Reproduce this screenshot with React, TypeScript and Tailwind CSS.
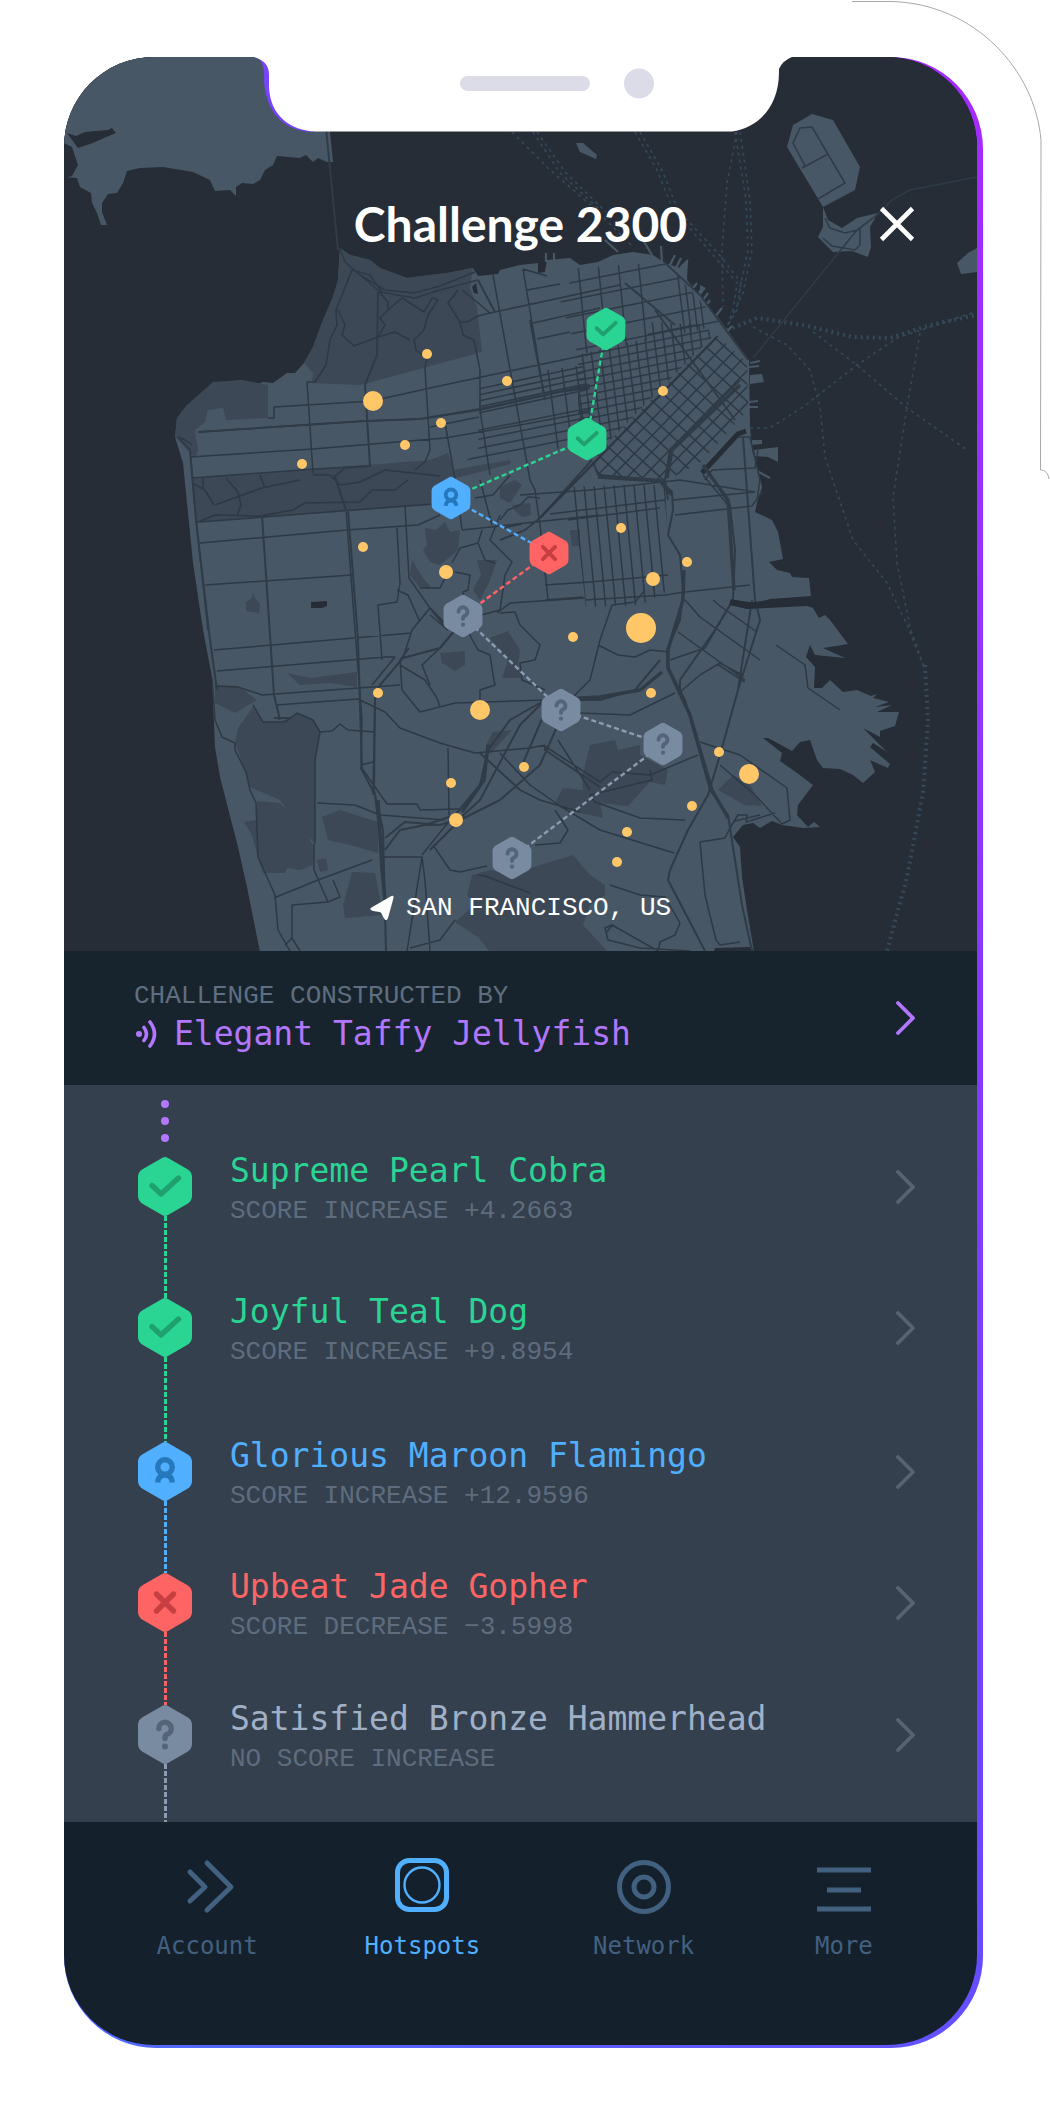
import React from "react";

type Kind = "check" | "award" | "cross" | "unknown";

const MONO = "font-['DejaVu_Sans_Mono',monospace]";
const CAPS = "font-['Liberation_Mono',monospace]";

const HEX: Record<Kind, { fill: string; mark: string }> = {
  check: { fill: "#2ad594", mark: "#20a06f" },
  award: { fill: "#51afff", mark: "#2678bd" },
  cross: { fill: "#ff6464", mark: "#c83f42" },
  unknown: { fill: "#798ba1", mark: "#556579" },
};

/** Hexagon badge drawn around the origin, 54 wide and 59 high. */
function HexShape({ kind }: { kind: Kind }) {
  const { fill, mark } = HEX[kind];
  return (
    <g>
      <path
        fill={fill}
        d="M-3 -28.5 Q0 -30.3 3 -28.5 L22.5 -17.3 Q27 -14.5 27 -9.5 L27 9.5 Q27 14.5 22.5 17.3 L3 28.5 Q0 30.3 -3 28.5 L-22.5 17.3 Q-27 14.5 -27 9.5 L-27 -9.5 Q-27 -14.5 -22.5 -17.3 Z"
      />
      <g fill="none" stroke={mark} strokeWidth="5.4" strokeLinecap="round" strokeLinejoin="round">
        {kind === "check" && <path d="M-13 -1 L-4 7.5 L13.5 -8.5" />}
        {kind === "cross" && <path d="M-8.5 -8.5 L8.5 8.5 M8.5 -8.5 L-8.5 8.5" />}
        {kind === "award" && (
          <g strokeLinecap="butt">
            <circle cx="0" cy="-4.5" r="7.3" />
            <path d="M-7.3 11 C-7 5.5 -4 3.6 0 3.6 C4 3.6 7 5.5 7.3 11" />
          </g>
        )}
        {kind === "unknown" && <path d="M-6.2 -6 A6.2 6.2 0 1 1 2.2 -0.2 Q0 0.8 0 4" />}
      </g>
      {kind === "unknown" && <circle cx="0" cy="12" r="3" fill={mark} />}
    </g>
  );
}

/** Parallel street segments: `n` copies of one segment, each moved by (sx, sy). */
function streets(x: number, y: number, dx: number, dy: number, sx: number, sy: number, n: number) {
  return Array.from({ length: n }, (_, i) => `M${x + i * sx} ${y + i * sy}l${dx} ${dy}`).join("");
}

const LAND =
  "M340 248 L338 280 L333 297 L323 320 L313 347 L304 363 L295 373 L287 373 L273 383 L263 382 L255 385 L242 380 L227 382 L213 382 L197 400 L187 405 L177 418 L175 437 L183 463 L188 513 L193 563 L203 630 L212 677 L215 747 L220 777 L238 847 L247 887 L260 952 L754 952 L747 910 L742 877 L740 847 L733 837 L743 825 L753 823 L760 828 L772 821 L782 825 L803 828 L820 827 L814 822 L808 827 L797 815 L798 805 L813 785 L797 773 L780 761 L782 753 L763 738 L768 738 L792 751 L800 742 L810 740 L817 760 L823 768 L840 769 L853 775 L863 783 L875 772 L870 760 L888 768 L890 764 L870 747 L873 743 L887 752 L863 728 L880 737 L880 731 L895 726 L899 712 L877 712 L892 705 L875 707 L889 702 L873 698 L877 694 L871 696 L857 690 L843 692 L830 680 L822 688 L814 688 L815 667 L806 657 L810 645 L815 655 L845 658 L823 648 L848 644 L830 620 L825 615 L819 618 L813 608 L807 606 L747 609 L733 603 L735 600 L757 603 L770 599 L811 596 L809 578 L792 577 L790 573 L777 570 L769 562 L783 559 L778 532 L772 520 L755 512 L757 503 L762 487 L758 470 L752 450 L751 437 L750 428 L749 360 L743 352 L720 320 L687 280 L688 260 L680 268 L665 263 L653 255 L633 252 L613 255 L598 262 L580 265 L570 258 L547 260 L545 272 L538 273 L538 263 L520 265 L500 270 L498 274 L478 276 L473 268 L447 273 L407 278 L380 268 L370 260 L350 255 Z";

const PARKS =
  "M340 248 L350 255 L370 260 L380 268 L407 278 L447 273 L473 268 L470 288 L477 307 L482 352 L427 367 L360 385 L312 383 L313 373 L304 363 L313 347 L323 320 L333 297 L338 280Z" +
  "M213 382 L242 380 L268 385 L268 418 L226 420 L223 408 L208 410 L205 422 L195 430 L198 450 L195 458 L175 437 L177 418 L187 405Z" +
  "M192 478 L303 470 L430 460 L448 453 L454 470 L510 460 L511 464 L456 478 L433 505 L197 522Z" +
  "M215 685 L238 686 L257 700 L235 713 L215 703Z" +
  "M253 707 L263 722 L280 722 L297 713 L313 720 L320 733 L315 760 L315 843 L303 833 L280 800 L250 787 L243 765 L235 743 L238 728Z" +
  "M257 801 L280 803 L298 822 L313 845 L313 865 L300 870 L287 868 L285 873 L263 873 L257 853 L252 835 L244 822 L256 820Z" +
  "M322 817 L340 810 L378 822 L378 853 L350 845 L328 840Z M352 872 L375 873 L383 915 L345 918 L343 905Z M317 860 L326 858 L328 870 L320 872Z" +
  "M467 895 L472 875 L490 870 L512 875 L540 865 L573 855 L590 875 L605 885 L605 895 L590 905 L583 925 L608 952 L490 952 L478 937 L455 922 L475 905Z" +
  "M425 528 L436 530 L445 522 L450 532 L460 530 L458 550 L440 565 L430 562 L423 550 L427 545Z M412 560 L423 578 L432 588 L420 588 L410 575Z" +
  "M477 560 L497 560 L490 580 L480 600 L473 590 L481 575Z M500 487 L515 480 L522 485 L510 503 L500 498Z M512 505 L530 503 L531 515 L522 517 L514 510Z" +
  "M490 638 L508 631 L520 650 L518 665 L521 678 L502 678 L508 660Z M440 653 L465 651 L465 665 L455 671 L442 663Z" +
  "M287 673 L310 678 L357 672 L357 687 L330 683 L300 685Z M493 732 L512 730 L490 754 L486 745Z" +
  "M590 745 L615 740 L618 750 L640 745 L640 755 L668 770 L665 785 L650 782 L628 806 L600 803 L603 818 L575 812 L555 803 L563 788 L583 790 L582 778Z" +
  "M718 790 L733 775 L750 785 L762 806 L745 805Z M246 602 L252 598 L253 592 L255 598 L260 604 L259 613 L246 611Z M570 530 L580 530 L580 546 L572 546Z";

const ROADS =
  "M198 432 L365 421 L420 419 L480 410 L560 392 L590 388 M190 457 L313 449 L445 438 L520 425 L590 412 M192 478 L315 469 L368 466" +
  "M268 418 L274 418 L274 407 L372 401 L430 388 L505 372 L600 352 M313 473 L307 382 L315 382 L326 365 L330 340 L337 325 L336 310 L352 270 L370 275 L382 292" +
  "M340 248 L345 262 L360 275 L380 292 L415 298 L440 290 L478 280 M360 275 L385 290 L414 293 L440 286 L475 272" +
  "M462 290 L477 302 L490 313 L478 316 L467 322 L460 322 L448 303 L458 290 M460 322 L463 335 L474 340 L480 370 L480 410 L490 475" +
  "M379 292 L388 302 L388 310 L380 318 L385 325 L378 337 L354 346 L342 335 L345 325 L338 310 M388 310 L402 298 L424 312 L432 298 L438 300 L428 315 L424 330 L414 340 L416 350 L427 358 L425 368 L430 450 L425 462 L415 470 M378 337 L395 332 L410 340" +
  "M523 269 L545 400 M493 275 L530 480 L535 490 L540 525 L548 600 M490 313 L620 285 M527 290 L560 284 M533 323 L600 308 M537 339 L570 332 M523 269 L547 276" +
  "M445 423 L457 490 L462 530 M430 427 L479 417" +
  "M192 445 L185 440 L178 437 L190 450 L196 520 L208 630 M200 522 L405 506 L435 504 M200 543 L347 530 L418 525 L440 515 M205 585 L352 575" +
  "M334 475 L346 510 L355 630 L362 720 L361 770 M405 506 L409 578 L430 608 L447 625 M397 528 L400 583 L397 602 L378 605 L382 660" +
  "M313 475 L330 475 L340 485 L360 482 L385 470 L440 476 M215 505 L262 488 L300 480 M226 478 L238 492 L241 505 L237 516 M192 483 L205 490 L214 505" +
  "M196 523 L215 515 L260 516 L293 510 L305 503 L360 502 L372 490 L395 490 L408 480 M203 478 L203 490 M260 475 L265 488" +
  "M397 590 L408 595 L420 622 M214 650 L412 633 M217 671 L385 657 L395 657 L372 685 M215 686 L238 687 L262 695 L400 685" +
  "M276 705 L358 699 L385 712 L400 728 L440 743 L475 753 L530 748 L545 745 M320 732 L332 731 L340 724 L348 730 L375 732 M375 695 L373 795" +
  "M212 677 L215 720 L222 737 L235 743 L235 750 L246 772 L250 790 L256 803 L258 857 L275 895 L278 930 L290 951 M314 843 L314 870 L328 902 L340 897 L333 880" +
  "M315 843 L315 760 L320 732 L313 720 L297 713 L285 722 L263 722 L253 705 M274 898 L318 880 L372 860 M328 902 L292 905 L292 938 L300 951 M292 938 L285 945" +
  "M361 767 L387 804 L417 804 L420 810 L460 809 M317 803 L355 805 L380 815 L445 820 M361 765 L373 762 M448 748 L449 815" +
  "M384 857 L422 857 L425 880 L430 951 M422 857 L407 951 M422 855 L450 820 M433 845 L450 870 L460 872 L487 866" +
  "M409 648 L400 660 L402 690 L420 712 L455 703 L545 700 M400 665 L425 680 L437 698 L440 707 M430 608 L412 630 L403 658 L440 648 L455 630 M440 648 L422 665 L430 685" +
  "M467 630 L478 650 L490 655 L493 675 L495 685 L480 690 L480 702 M500 613 L515 612 L520 625 L540 645 L535 660 L520 663 L522 680 L545 690" +
  "M497 613 L510 603 L585 598 M430 615 L448 630 M455 572 L470 575 L468 590 L463 592 L463 600 M420 588 L440 588 L445 578 M452 563 L460 548 L478 543 L482 530 M478 543 L485 560 L495 563" +
  "M462 530 L500 526 L535 522 L600 515 M510 475 L493 495 L475 498 M480 480 L492 525 M500 515 L490 540 L512 562 L505 575 L500 610 L463 620 M503 528 L522 524" +
  "M520 495 L590 490 L680 480 L755 492 M540 498 L528 497 L520 505 L508 510 L500 520 M568 520 L660 508 M550 514 L665 500 M545 585 L590 582 L668 575 M545 600 L583 597 M675 515 L752 506 L762 492 M673 500 L755 492" +
  "M558 740 L590 790 M543 745 L600 782 L612 772 L650 775 L698 755 M500 753 L530 785 L560 806 L600 830 L674 853 M595 802 L640 818 L685 820 M595 802 L590 795 L652 780 L650 770" +
  "M520 790 L540 800 L580 812 M555 810 L568 830 L560 843 L535 845 M478 875 L485 876 L530 893 M410 948 L440 940 L455 920" +
  "M610 885 L640 895 L665 897 L680 923 L675 935 L660 942 L658 951 L612 925 L607 932 M612 925 L605 928 L608 940 L640 948 L690 951" +
  "M700 842 L725 838 L730 828 L738 815 L747 815 L746 822 L775 813 M700 842 L705 895 L716 940 L720 945 L740 942 M735 821 L760 815 M700 742 L740 755 L787 788 L790 820 L782 824 L755 795 L720 765" +
  "M713 600 L720 606 L757 632 M685 600 L700 617 L760 660 M678 632 L745 680 M670 660 L705 648 L730 605 M680 692 L700 675 L720 663 L742 675 M598 645 L618 655 L635 657 L650 650 L670 652 M776 645 L805 665 L808 688 L840 710 M717 664 L745 682" +
  "M585 600 L665 595 L685 592 M645 590 L635 602 L612 605 L600 640 L590 680 L570 700 M685 592 L750 585 M703 475 L728 505 M738 437 L750 437 L760 480 L757 500 M712 470 L755 468 L758 450 M712 470 L705 480 M580 713 L630 715 L675 693";

const MAIN_ROADS =
  "M378 292 L377 355 L365 385 L370 466 L345 468 L335 476 L346 510 M198 432 L365 421 L420 419 L480 409 L590 385 M545 400 L530 320" +
  "M190 450 L196 520 L210 640 L217 690 M262 515 L274 695 L280 720 M348 510 L358 640 L362 770 L375 795 L384 870 L386 951" +
  "M430 608 L448 630 M455 630 L440 648 L403 658 L380 685 L375 700 L374 790 L383 830 L386 951" +
  "M274 718 L290 718 M478 280 L495 312 M540 518 L592 460 M540 518 L525 530 L500 540 M593 462 L598 475 L660 480 L672 492 L673 510 L668 535 L680 555 L683 590 L680 620 L667 650 L667 665 L685 700 L710 790 L728 815 L735 860 L742 905 L752 951" +
  "M660 660 L635 690 L600 700 L545 700 L510 720 L488 750 L480 785 L455 815 L425 825 L400 830 L385 850 M545 700 L520 725 L480 800 L458 820 M455 820 L440 825 L405 822 L385 838" +
  "M655 310 L735 420 M560 720 L540 765 L500 800 L460 820 L430 850 M548 705 L520 770 M704 465 L730 505 L735 550 L733 600 L715 630 L680 680 L680 695 M752 600 L738 690 L720 755 L708 795 L688 830 L670 870 L668 880 L705 951 M743 437 L755 600 L760 620 L738 690" +
  "M665 263 L700 295 L748 360 M625 283 L675 325 M545 745 L545 750 L600 787 M480 753 L520 790 M668 500 L665 480 L670 450 L740 380";

const FREEWAY =
  "M545 700 L600 697 L640 690 L662 672 M684 570 L683 600 L668 650 L668 668 L690 715 L706 770 L712 790 L728 818 M488 745 L484 780 L462 812 M378 800 L382 870 L385 900 M598 477 L660 481 L672 495 M740 385 L672 450 L667 478 M703 465 L728 500 L734 590";

const FERRIES =
  "M512 132 L550 170 L593 207 L633 247 M533 132 L560 173 L600 210 M537 132 L566 173 L606 212 M635 132 L657 170 L673 210 L700 240 L720 263 L737 283 L733 310 L727 327 M640 132 L662 170 L678 210 L704 238 L724 260 L741 283 L737 310 L727 327" +
  "M737 132 L727 183 L722 250 L723 307 M740 132 L750 200 L752 250 L743 293 L728 325 M735 132 L746 200 L748 250 L739 293" +
  "M753 327 L787 345 L810 370 L820 407 L825 457 L853 540 L887 583 L908 627 L925 670 M813 332 L857 365 L907 408 L967 450 M750 428 L770 428 L803 407 L857 365 L897 338 L975 312 M920 333 L907 407 L893 497 L897 563 L910 627 L925 670";

const FERRIES_BOLD =
  "M727 330 L757 318 L803 325 L853 337 L890 338 L930 325 L977 315 M925 665 L928 720 L923 793 L907 877 L887 951";

const PIERS =
  "M697 283 L690 292 M703 287 L695 298 M708 293 L700 304 M710 300 L704 308 M661 246 L662 262 M675 255 L670 265 M681 258 L676 268 M640 235 L652 255 M605 240 L618 252 M722 308 L714 318 M732 326 L724 335 M546 253 L546 262 M554 253 L554 262 M680 268 L688 260 M750 363 L760 361 M749 367 L759 366 M749 402 L758 401 M749 407 L758 407 M755 470 L770 478";

const PIER_BLOCKS =
  "M750 375 L762 374 L764 382 L750 384Z M752 440 L762 440 L762 444 L752 445Z M754 450 L778 447 L778 462 L768 457 L755 456Z M688 260 L686 280 L678 270Z M700 285 L706 288 L700 296Z";

const NODES: { x: number; y: number; kind: Kind }[] = [
  { x: 606, y: 329, kind: "check" },
  { x: 587, y: 439, kind: "check" },
  { x: 451, y: 498, kind: "award" },
  { x: 549, y: 553, kind: "cross" },
  { x: 463, y: 616, kind: "unknown" },
  { x: 561, y: 710, kind: "unknown" },
  { x: 663, y: 744, kind: "unknown" },
  { x: 512, y: 858, kind: "unknown" },
];

const HOTSPOTS: [number, number, number][] = [
  [427, 354, 5], [373, 401, 10], [507, 381, 5], [441, 423, 5], [405, 445, 5], [302, 464, 5],
  [363, 547, 5], [446, 572, 7], [663, 391, 5], [621, 528, 5], [687, 562, 5], [653, 579, 7],
  [641, 628, 15], [573, 637, 5], [651, 693, 5], [719, 752, 5], [749, 774, 10], [692, 806, 5],
  [627, 832, 5], [617, 862, 5], [378, 693, 5], [480, 710, 10], [524, 767, 5], [451, 783, 5], [456, 820, 7],
];

function CityMap() {
  return (
    <svg viewBox="64 57 913 894" className="block h-auto w-full bg-[#262d36]" role="img" aria-label="Map of San Francisco">
      <defs>
        <clipPath id="soma">
          <path d="M717 335 L747 363 L748 410 L700 463 L663 482 L600 477 L590 460Z" />
        </clipPath>
        <clipPath id="downtown">
          <path d="M578 355 L648 338 L648 322 L706 325 L712 337 L592 458 L578 420Z" />
        </clipPath>
        <clipPath id="northeast">
          <path d="M578 268 L665 262 L722 325 L650 340 L578 355 L560 300Z" />
        </clipPath>
        <clipPath id="western">
          <path d="M480 382 L580 355 L600 440 L456 470 L478 450Z" />
        </clipPath>
        <clipPath id="mission">
          <path d="M572 487 L665 483 L670 590 L640 605 L586 607Z" />
        </clipPath>
      </defs>

      <path
        fill="#485766"
        d="M64 57 L333 57 L330 132 L333 162 L327 162 L318 158 L313 162 L306 155 L300 158 L277 156 L273 165 L265 170 L260 180 L253 184 L242 183 L236 187 L236 196 L230 190 L215 191 L210 180 L193 172 L163 167 L140 168 L127 171 L123 183 L117 193 L108 194 L102 203 L102 212 L107 225 L101 225 L97 213 L92 203 L91 193 L80 187 L77 178 L64 177 Z"
      />
      <path fill="#262d36" d="M67 133 L76 136 L85 132 L108 130 L112 128 L116 133 L104 138 L93 143 L78 148 Z M64 143 L72 147 L78 165 L72 176 L64 178Z" />
      <path fill="none" stroke="#303c49" strokeWidth="2" d="M326 128 L338 250" />

      <g fill="none" stroke="#35495a" strokeWidth="1.6" strokeDasharray="3 4">
        <path d={FERRIES} />
        <path d={FERRIES_BOLD} strokeWidth="4" strokeDasharray="2 4" />
      </g>

      <path
        fill="#485766"
        d="M812 114 L833 120 L860 167 L855 190 L823 207 L787 147 L793 125Z M823 207 L828 220 L842 228 L857 218 L878 213 L870 227 L871 247 L868 257 L852 251 L833 252 L818 237 L823 227Z M576 143 L583 143 L597 155 L596 159 L580 152Z M957 263 L968 253 L977 248 L977 272 L961 274Z"
      />
      <path
        fill="none"
        stroke="#2f3b48"
        strokeWidth="1.6"
        d="M805 166 L793 143 L800 128 L812 127 L845 183 L818 199 M802 168 L828 154 M825 218 L830 228 L845 233 L858 230 M823 238 L832 246 L855 250 L860 245 L860 228 M753 358 L857 230 L877 215 M877 215 L892 200 L910 190 L977 177"
      />

      <path fill="#485766" d={LAND} />
      <path fill="#3c4855" d={PARKS} />
      <path fill="#485766" d={PIER_BLOCKS} />
      <path fill="none" stroke="#485766" strokeWidth="2.2" d={PIERS} />
      <path fill="none" stroke="#262d36" strokeWidth="5" d="M746 431 L738 434 L702 473" />
      <path fill="#262d36" d="M311 602 L327 601 L327 606 L322 608 L311 608Z M472 287 L476 283 L478 294 L474 293Z M478 270 L500 263 L500 270 L478 275Z M715 948 L750 947 L754 951 L714 951Z" />

      <g fill="none" stroke="#2d3945" strokeWidth="1.5" strokeLinejoin="round">
        <path d={ROADS} />
        <g clipPath="url(#soma)">
          <path d={streets(540, 518, 200, -205, 9, 7, 26)} />
          <path d={streets(700, 290, 130, 118, -9, 9, 22)} />
        </g>
        <g clipPath="url(#downtown)">
          <path d={streets(570, 350, 160, -32, 0, 8, 20)} />
          <path d={streets(570, 330, 16, 130, 9, -2, 16)} />
        </g>
        <g clipPath="url(#northeast)">
          <path d={streets(560, 285, 170, -34, 0, 17, 8)} />
          <path d={streets(577, 255, 12, 120, 20, -2, 4)} />
          <path d={streets(676, 262, 10, 80, 7, 4, 4)} />
        </g>
        <g clipPath="url(#western)">
          <path d={streets(450, 395, 150, -32, 0, 6, 5)} />
          <path d={streets(450, 436, 150, -30, 0, 9, 6)} />
          <path d={streets(548, 370, 14, 110, 14, -2, 4)} />
        </g>
        <g clipPath="url(#mission)">
          <path d={streets(574, 485, 12, 125, 10, 0, 10)} />
        </g>
      </g>
      <path d={MAIN_ROADS} fill="none" stroke="#2f3b47" strokeWidth="2" strokeLinejoin="round" />
      <path d={FREEWAY} fill="none" stroke="#2f3b47" strokeWidth="3.4" strokeLinejoin="round" />
      <path d="M540 518 L717 337" fill="none" stroke="#2c3743" strokeWidth="2.2" />
      <path d="M730 602 L747 606 L770 603 L812 601" fill="none" stroke="#262d36" strokeWidth="6" />

      {HOTSPOTS.map(([x, y, r]) => (
        <circle key={`${x}-${y}`} cx={x} cy={y} r={r} fill="#ffc768" />
      ))}
      {NODES.slice(1).map((n, i) => (
        <line
          key={i}
          x1={NODES[i].x}
          y1={NODES[i].y}
          x2={n.x}
          y2={n.y}
          stroke={NODES[i].kind === "unknown" ? "#8b9cb2" : HEX[NODES[i].kind].fill}
          strokeWidth="2.4"
          strokeDasharray="5 3"
        />
      ))}
      {NODES.map((n) => (
        <g key={n.y} transform={`translate(${n.x} ${n.y}) scale(0.72)`}>
          <HexShape kind={n.kind} />
        </g>
      ))}
    </svg>
  );
}

function Chevron({ className }: { className: string }) {
  return (
    <svg viewBox="0 0 20 34" className={`h-[34px] w-5 shrink-0 ${className}`} aria-hidden="true">
      <path d="M2 2 L17 17 L2 32" fill="none" stroke="currentColor" strokeWidth="3.8" strokeLinecap="round" strokeLinejoin="round" />
    </svg>
  );
}

const ROWS: { name: string; detail: string; kind: Kind; color: string; text: string; height: string }[] = [
  { name: "Supreme Pearl Cobra", detail: "SCORE INCREASE +4.2663", kind: "check", color: "text-[#2ad594]", text: "text-[#2ad594]", height: "min-h-[141px]" },
  { name: "Joyful Teal Dog", detail: "SCORE INCREASE +9.8954", kind: "check", color: "text-[#2ad594]", text: "text-[#2ad594]", height: "min-h-[144px]" },
  { name: "Glorious Maroon Flamingo", detail: "SCORE INCREASE +12.9596", kind: "award", color: "text-[#51afff]", text: "text-[#51afff]", height: "min-h-[131px]" },
  { name: "Upbeat Jade Gopher", detail: "SCORE DECREASE −3.5998", kind: "cross", color: "text-[#ff6464]", text: "text-[#ff6464]", height: "min-h-[132px]" },
  { name: "Satisfied Bronze Hammerhead", detail: "NO SCORE INCREASE", kind: "unknown", color: "text-[#8b9cb2]", text: "text-[#a0b1c7]", height: "min-h-[117px]" },
];

function HopRow({ row }: { row: (typeof ROWS)[number] }) {
  return (
    <li>
      <button type="button" className={`flex w-full items-stretch gap-[38px] pr-[61px] pl-[74px] text-left ${row.height}`}>
        <span className={`flex shrink-0 flex-col items-center ${row.color}`}>
          <svg viewBox="-27 -29.5 54 59" className="h-[59px] w-[54px]" aria-hidden="true">
            <HexShape kind={row.kind} />
          </svg>
          <span className="w-[3px] flex-1 bg-[repeating-linear-gradient(to_bottom,currentColor_0_5px,transparent_5px_7px)]" />
        </span>
        <span className="-mt-1.5 flex flex-1 flex-col">
          <span className={`text-[33px] leading-10 ${MONO} ${row.text}`}>{row.name}</span>
          <span className={`text-[26px] leading-10 text-[#5f6c7e] ${CAPS}`}>{row.detail}</span>
        </span>
        <span className="flex h-[59px] items-center">
          <Chevron className="text-[#566372]" />
        </span>
      </button>
    </li>
  );
}

const TABS: { label: string; active?: boolean; icon: React.ReactNode }[] = [
  {
    label: "Account",
    icon: <path d="M11 14 L26 29 L11 43 M28 5 L52 29 L28 52" strokeWidth="5" strokeLinecap="round" strokeLinejoin="round" />,
  },
  {
    label: "Hotspots",
    active: true,
    icon: (
      <>
        <rect x="3.5" y="2.5" width="49" height="49" rx="12" strokeWidth="5" />
        <circle cx="28" cy="27" r="17.5" strokeWidth="2.4" />
      </>
    ),
  },
  {
    label: "Network",
    icon: (
      <>
        <circle cx="28" cy="29" r="24.5" strokeWidth="5" />
        <circle cx="28" cy="29" r="10" strokeWidth="5" />
      </>
    ),
  },
  { label: "More", icon: <path d="M1 12 H55 M11 32 H45 M1 51 H55" strokeWidth="5" /> },
];

export default function App() {
  return (
    <div className="relative min-h-screen bg-white pt-[57px] pr-[67px] pb-[62px] pl-16">
      <svg viewBox="0 0 200 480" className="absolute top-0 right-0 h-[480px] w-[200px]" aria-hidden="true">
        <path
          d="M2 1.5 L42 1.5 C125 4 185 70 191 140 L190.5 470 C195 470 198 473 199 479"
          fill="none"
          stroke="#a9a9ad"
          strokeWidth="1"
        />
      </svg>

      <main className="relative rounded-[92px] bg-[linear-gradient(210deg,#a62bff,#6c45ff_70%,#4f6bff)] pr-1.5 pb-[3px]">
        <div className="overflow-hidden rounded-[90px] bg-[#14202b]">
          <section className="relative">
            <CityMap />
            <div className="absolute inset-0 flex flex-col justify-between pt-[137px] pb-[27px] text-white">
              <header className="grid grid-cols-[1fr_auto_1fr] items-center">
                <h1 className="col-start-2 font-['Lato',sans-serif] text-[48px] leading-[60px] font-bold">Challenge 2300</h1>
                <button type="button" aria-label="Close" className="mr-[62px] justify-self-end">
                  <svg viewBox="0 0 36 36" className="size-9" aria-hidden="true">
                    <path d="M2.5 2.5 L33.5 33.5 M33.5 2.5 L2.5 33.5" stroke="white" strokeWidth="4.6" />
                  </svg>
                </button>
              </header>
              <p className={`flex items-center justify-center gap-3 text-[26px] leading-8 ${CAPS}`}>
                <svg viewBox="0 0 24 26" className="h-[26px] w-6" aria-hidden="true">
                  <path
                    d="M20.5 1.5 Q24 -0.5 23.5 3 L18 23 Q16.5 27 14 23.500 L11.5 18.5 Q11 17 9.500 17 L3 16 Q-1.500 14.500 1.5 12.500 Z"
                    fill="white"
                  />
                </svg>
                SAN FRANCISCO, US
              </p>
            </div>
          </section>

          <button type="button" className="flex min-h-[134px] w-full items-center justify-between bg-[#17242d] pr-[61px] pl-[70px] text-left">
            <span className="flex flex-col">
              <span className={`text-[26px] leading-8 text-[#5f6e80] ${CAPS}`}>CHALLENGE CONSTRUCTED BY</span>
              <span className={`flex items-center gap-4 text-[33px] leading-11 text-[#b377ff] ${MONO}`}>
                <svg viewBox="0 0 24 28" className="h-7 w-6" aria-hidden="true">
                  <circle cx="5" cy="14" r="3" fill="currentColor" />
                  <path d="M10 7.5 Q15 14 10 20.5 M16 2 Q25 14 16 26" fill="none" stroke="currentColor" strokeWidth="3.6" strokeLinecap="round" />
                </svg>
                Elegant Taffy Jellyfish
              </span>
            </span>
            <Chevron className="text-[#b377ff]" />
          </button>

          <section className="bg-[#34404d] pt-[15px]">
            <div className="mb-[15px] ml-[97px] flex w-2 flex-col gap-[9px]" aria-hidden="true">
              <span className="size-2 rounded-full bg-[#b377ff]" />
              <span className="size-2 rounded-full bg-[#b377ff]" />
              <span className="size-2 rounded-full bg-[#b377ff]" />
            </div>
            <ol>
              {ROWS.map((row) => (
                <HopRow key={row.name} row={row} />
              ))}
            </ol>
          </section>

          <nav className="grid grid-cols-[214fr_216fr_226fr_174fr] items-start pt-9 pr-[46px] pb-[83px] pl-9">
            {TABS.map((tab) => (
              <a
                key={tab.label}
                href="#"
                aria-current={tab.active ? "page" : undefined}
                className={`flex flex-col items-center gap-4 ${tab.active ? "text-[#51afff]" : "text-[#426080]"}`}
              >
                <svg viewBox="0 0 56 56" className="size-14" fill="none" stroke="currentColor" aria-hidden="true">
                  {tab.icon}
                </svg>
                <span className={`text-[24px] leading-8 ${MONO}`}>{tab.label}</span>
              </a>
            ))}
          </nav>
        </div>

        <svg viewBox="0 0 544 76" className="absolute top-0 left-[186px] h-[76px] w-[544px]" aria-hidden="true">
          <path d="M6 -1 Q15 6 14 20 C14 50 30 74 62 75 L80 -1Z" fill="#7743ff" />
          <path
            d="M0 -2 L4 0 Q19 4 19 18 L19 30 C20 58 40 74 66 74.5 L482 74.5 C508 71 529 50 529 15 L529 12 Q532 4 542 0 L542 -2Z"
            fill="white"
          />
          <rect x="210" y="19" width="130" height="15" rx="7.5" fill="#dcdbe8" />
          <circle cx="389" cy="26.5" r="15" fill="#dcdbe8" />
        </svg>
      </main>
    </div>
  );
}
